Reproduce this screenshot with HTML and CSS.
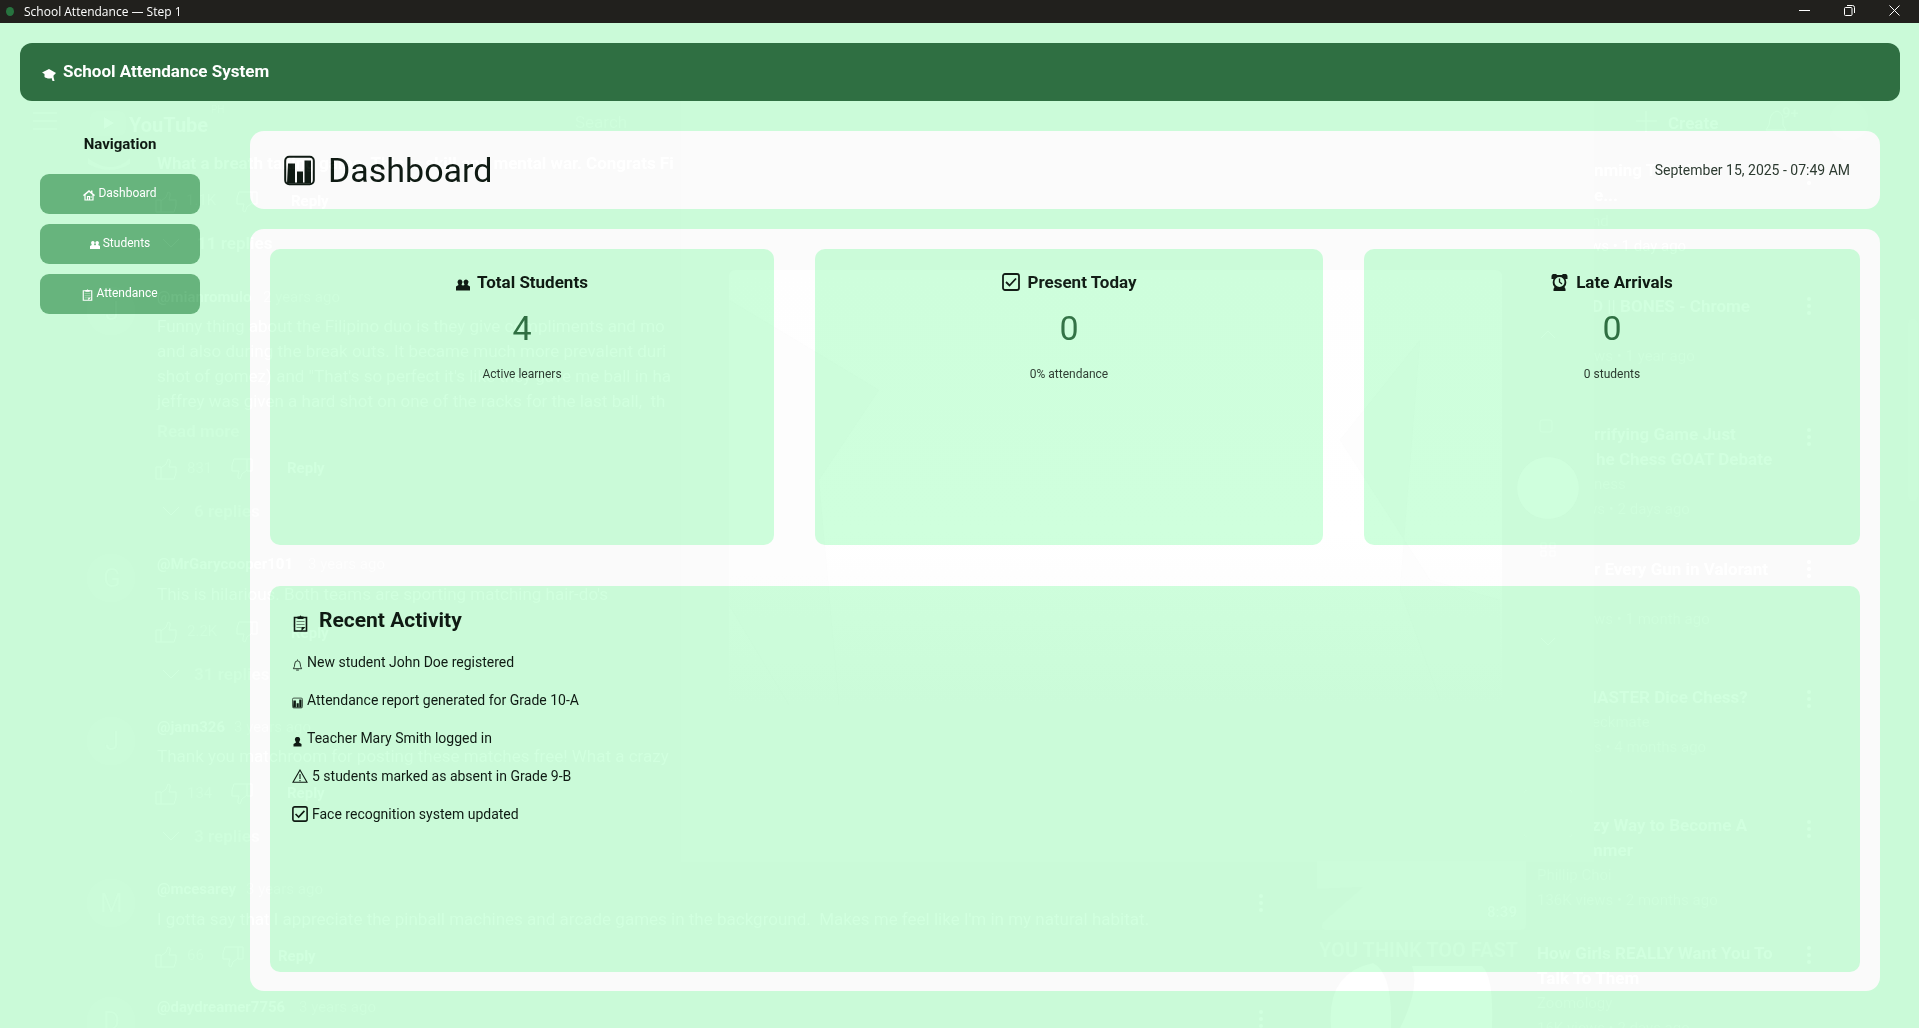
FILE: index.html
```html
<!DOCTYPE html>
<html lang="en">
<head>
<meta charset="utf-8">
<title>School Attendance — Step 1</title>
<link rel="stylesheet" href="styles.css">
</head>
<body>
<svg class="defs" aria-hidden="true">
  <symbol id="i-cap" viewBox="0 0 14 14"><path fill="currentColor" d="M7 2 0 5.500 2.500 7v3c2 1.500 5 2 7 1l1 3h2l-1-4V8.500L14 6z"/></symbol>
  <symbol id="i-home" viewBox="0 0 12 12"><path fill="currentColor" d="M6 1 0 6l1 1.200L6 3l5 4.200L12 6 9.500 4V1.500H8v1.200z"/><path fill="none" stroke="currentColor" stroke-width="1.200" d="M2 6v5h8V6M4.500 11V7.500h2V11M7.500 8h1.500"/></symbol>
  <symbol id="i-users" viewBox="0 0 14 11"><path fill="currentColor" d="M4 0a2.500 2.500 0 0 1 2 4l-.5 1.500L7 6l1.500-.5L8 4a2.500 2.500 0 1 1 4 0l-.5 1.500L14 7v4H0V7l2.500-1.500L2 4a2.500 2.500 0 0 1 2-4z"/></symbol>
  <symbol id="i-clip" viewBox="0 0 14 17"><path fill="none" stroke="currentColor" stroke-width="1.600" d="M1 2.500h12V16H1z"/><path fill="currentColor" d="M4 4V1.500h2Q7-.5 8 1.500h2V4zM8 16v-4h4z"/><path fill="none" stroke="currentColor" opacity=".5" d="M3 6.500h8M3 9.500h8M3 12.500h5"/></symbol>
  <symbol id="i-chart" viewBox="0 0 31 30"><rect x="1.200" y="1.200" width="28.600" height="27.600" rx="4" fill="none" stroke="currentColor" stroke-width="2"/><path fill="currentColor" d="M4 8h7v19h2V16h6v11h1.500V5H27v23H3z"/></symbol>
  <symbol id="i-check" viewBox="0 0 18 18"><rect x="1" y="1" width="16" height="16" rx="2" fill="none" stroke="currentColor" stroke-width="1.800"/><path fill="none" stroke="currentColor" stroke-width="1.800" d="m4 9 3.500 3.500L14 5.500"/></symbol>
  <symbol id="i-clock" viewBox="0 0 16 17"><path fill="currentColor" fill-rule="evenodd" d="M0 3a3 3 0 0 1 5.500-2h5A3 3 0 0 1 16 3v2h-2q2 5-1 8l1 2v2H2v-2l1-2Q0 10 2 5H0zm8 0a5 5 0 1 0 0 10A5 5 0 0 0 8 3z"/><path fill="none" stroke="currentColor" stroke-width="1.300" d="M8 4.500V8l2.500 2"/></symbol>
  <symbol id="i-bell" viewBox="0 0 11 13"><path fill="none" stroke="currentColor" stroke-width=".9" d="M5.500.5v1.200M1 10.500q1.500-2 1.500-5a3 3.500 0 0 1 6 0q0 3 1.500 5zM4 12h3"/></symbol>
  <symbol id="i-user" viewBox="0 0 11 12"><path fill="currentColor" d="M5.500 2a2.200 2.500 0 0 1 2 4.200L7 7.500l2.500 1.500v2.500h-8V9L4 7.500l-.5-1.300A2.200 2.500 0 0 1 5.500 2z"/></symbol>
  <symbol id="i-warn" viewBox="0 0 16 14"><path fill="none" stroke="currentColor" stroke-width="1.100" d="M8 1 1 13.200h14zM8 5v5M8 11v1.200"/></symbol>
  <symbol id="g-up" viewBox="0 0 22 22"><path class="gline" d="M1 9h5v12H1zM6 10l5-4 2-5q3 0 2 4l-1 4h7v6l-2 6H6"/></symbol>
  <symbol id="g-dots" viewBox="0 0 4 18"><circle cx="2" cy="2" r="2"/><circle cx="2" cy="9" r="2"/><circle cx="2" cy="16" r="2"/></symbol>
</svg>

<header class="titlebar">
  <span class="app-dot"></span>
  <span class="window-title">School Attendance — Step 1</span>
  <button class="win-btn" aria-label="Minimize"><svg width="11" height="11"><path d="M0 5.500h11"/></svg></button>
  <button class="win-btn" aria-label="Restore"><svg width="11" height="11"><path d="M.5 3.500a1 1 0 0 1 1-1H7a1 1 0 0 1 1 1v6a1 1 0 0 1-1 1H1.500a1 1 0 0 1-1-1zM3 .5h5.500a2 2 0 0 1 2 2V8"/></svg></button>
  <button class="win-btn" aria-label="Close"><svg width="11" height="11"><path d="m.5.5 10 10m0-10-10 10"/></svg></button>
</header>

<div class="app">
  <div class="appbar">
    <svg class="i14"><use href="#i-cap"/></svg>
    <h1>School Attendance System</h1>
  </div>
  <div class="layout">
    <nav class="sidebar">
      <h2>Navigation</h2>
      <button><svg class="i12"><use href="#i-home"/></svg>Dashboard</button>
      <button><svg class="i10"><use href="#i-users"/></svg>Students</button>
      <button><svg class="i11"><use href="#i-clip"/></svg>Attendance</button>
    </nav>
    <main>
      <section class="panel page-head">
        <svg class="i31"><use href="#i-chart"/></svg>
        <h2>Dashboard</h2>
        <time>September 15, 2025 - 07:49 AM</time>
      </section>
      <section class="panel content">
        <div class="stats">
          <article class="card stat">
            <h3><svg class="i14 low"><use href="#i-users"/></svg>Total Students</h3>
            <strong>4</strong><p>Active learners</p>
          </article>
          <article class="card stat">
            <h3 class="wide"><svg class="i18"><use href="#i-check"/></svg>Present Today</h3>
            <strong>0</strong><p>0% attendance</p>
          </article>
          <article class="card stat">
            <h3 class="wide"><svg class="i17"><use href="#i-clock"/></svg>Late Arrivals</h3>
            <strong>0</strong><p>0 students</p>
          </article>
        </div>
        <article class="card activity">
          <h3><svg class="i17 low"><use href="#i-clip"/></svg>Recent Activity</h3>
          <ul>
            <li><svg class="i11 low"><use href="#i-bell"/></svg>New student John Doe registered</li>
            <li><svg class="i11 low"><use href="#i-chart"/></svg>Attendance report generated for Grade 10-A</li>
            <li><svg class="i11 low"><use href="#i-user"/></svg>Teacher Mary Smith logged in</li>
            <li><svg class="i16"><use href="#i-warn"/></svg>5 students marked as absent in Grade 9-B</li>
            <li><svg class="i16"><use href="#i-check"/></svg>Face recognition system updated</li>
          </ul>
        </article>
      </section>
    </main>
  </div>
</div>

<!-- Window behind the translucent app: adds a little light wherever it is bright -->
<svg class="behind" aria-hidden="true">
  <defs>
    <clipPath id="left"><path d="M0 0h681v862h1238v166H0z"/></clipPath>
    <clipPath id="right"><path d="M1594 0h325v1028h-400V862h75z"/></clipPath>
    <linearGradient id="fade" x1="0" y1="0" x2="0" y2="1"><stop offset="0" stop-color="#040404"/><stop offset=".6" stop-color="#050505"/><stop offset="1" stop-color="#010101"/></linearGradient>
  </defs>
  <path class="g1" d="M681 100h913v762H681z"/>
  <rect x="729" y="270" width="773" height="435" rx="6" fill="url(#fade)"/>
  <path class="g2" d="M729 300l150 90-60 90 20 225h-50l-60-100zM1340 440l80-100-20 250 40 110h60V600l-70-20z" opacity=".5"/>

  <g clip-path="url(#left)">
    <path class="gline" d="M33 113h24M33 121h24M33 129h24"/>
    <rect class="g1" x="90" y="111" width="36" height="25" rx="6"/><path d="m104 117 10 6-10 6z"/>
    <text class="logo" x="129" y="132">YouTube</text><text class="s10 dim" x="211" y="113">PH</text>
    <text class="s16 dim" x="575" y="128">Search</text>
    <path d="M88 158q24 18 42 0v6q-20 12-42 0z" opacity=".4"/>
    <text class="b16" x="157" y="169">What a breath taking game. This is skill and mental war. Congrats Fi</text>
    <use href="#g-up" x="155" y="191" width="22" height="22"/><text class="s14 dim" x="186" y="205">1.1K</text>
    <use href="#g-up" width="22" height="22" transform="rotate(180 129 106.500)"/><text class="b14" x="291" y="206">Reply</text>
    <path class="gline" d="m163 239 8 8 8-8"/><text class="b16 soft" x="197" y="249">11 replies</text>
    <circle class="g1" cx="111" cy="311" r="25"/><text class="avatar" x="105" y="320">J</text>
    <text class="b14" x="157" y="302">@mianromulo</text><text class="s14 dim" x="263" y="302">2 years ago</text>
    <text class="s16" x="157" y="332">Funny thing about the Filipino duo is they give compliments and mo</text>
    <text class="s16" x="157" y="357">and also during the break outs. It became much more prevalent duri</text>
    <text class="s16" x="157" y="382">shot of gomez) and "That's so perfect it's like they gave me ball in ha</text>
    <text class="s16" x="157" y="407">jeffrey was given a hard shot on one of the racks for the last ball,&#160; th</text>
    <text class="b16 dim" x="157" y="437">Read more</text>
    <use href="#g-up" x="155" y="458" width="22" height="22"/><text class="s14 dim" x="187" y="473">831</text><use href="#g-up" width="22" height="22" transform="rotate(180 126.500 240)"/>
    <text class="b14" x="287" y="473">Reply</text>
    <path class="gline" d="m163 507 8 8 8-8"/><text class="b16 dim" x="194" y="517">6 replies</text>
    <circle class="g1" cx="111" cy="578" r="25"/><text class="avatar" x="103" y="587">G</text>
    <text class="b14" x="157" y="569">@MrGarycooper101</text><text class="s14 dim" x="308" y="569">3 years ago</text>
    <text class="s16" x="157" y="600">This is hilarious. Both teams are sporting matching hair-do's</text>
    <use href="#g-up" x="155" y="621" width="22" height="22"/><text class="s14 dim" x="187" y="636">2.2K</text><use href="#g-up" width="22" height="22" transform="rotate(180 129 321.500)"/>
    <text class="b14" x="291" y="638">Reply</text>
    <path class="gline" d="m163 670 8 8 8-8"/><text class="b16 dim" x="194" y="680">31 replies</text>
    <circle class="g1" cx="111" cy="741" r="25"/><text class="avatar" x="105" y="750">J</text>
    <text class="b14" x="157" y="732">@jann326</text><text class="s14 dim" x="234" y="732">3 years ago</text>
    <text class="s16" x="157" y="762">Thank you matchroom for posting these matches free! What a crazy</text>
    <use href="#g-up" x="155" y="783" width="22" height="22"/><text class="s14 dim" x="187" y="798">134</text><use href="#g-up" width="22" height="22" transform="rotate(180 126.500 402.500)"/>
    <text class="b14" x="287" y="798">Reply</text>
    <path class="gline" d="m163 832 8 8 8-8"/><text class="b16 dim" x="194" y="842">3 replies</text>
    <circle class="g1" cx="111" cy="903" r="25"/><text class="avatar" x="100" y="912">M</text>
    <text class="b14" x="157" y="894">@mcesarey</text><text class="s14 dim" x="246" y="894">3 years ago</text>
    <text class="s16" x="157" y="925">I gotta say that I appreciate the pinball machines and arcade games in the background.&#160; Makes me feel like I'm in my natural habitat.</text>
    <use href="#g-up" x="155" y="946" width="22" height="22"/><text class="s14 dim" x="187" y="960">66</text><use href="#g-up" width="22" height="22" transform="rotate(180 122 484)"/>
    <text class="b14" x="278" y="961">Reply</text>
    <circle class="g1" cx="111" cy="1021" r="25"/><text class="avatar" x="103" y="1030">D</text>
    <text class="b14" x="157" y="1012">@daydreamer7756</text><text class="s14 dim" x="299" y="1012">3 years ago</text>
    <use href="#g-dots" x="1259" y="894" width="4" height="18"/><use href="#g-dots" x="1259" y="1010" width="4" height="18"/>
  </g>

  <path class="gline" d="M1636 121h21M1646 111v21M1766 130h20l-3-5v-6q0-6-6-8-6 2-7 8l-1 6z"/>
  <text class="b16" x="1668" y="129">Create</text><text class="b14 dim" x="1782" y="118">9+</text>
  <circle class="g1" cx="1849" cy="121" r="20"/>
  <rect class="g1" x="1908" y="318" width="10" height="184" rx="5"/>
  <circle class="g3" cx="1548" cy="488" r="31"/>
  <path class="gline" d="m1541 338 7-7 7 7M1541 638l7 7 7-7M1540 422q0-2 2-2h8q2 0 2 2v8q0 2-2 2h-8q-2 0-2-2z"/>
  <path class="gline" d="M1541 543h5v5h-5zM1550 543h5v5h-5zM1541 551h5v5h-5zM1550 551h5v5h-5z"/>
  <rect class="gline" x="1524" y="790" width="48" height="47" rx="3" opacity=".5"/>
  <g clip-path="url(#right)">
    <text class="b16" x="1594" y="176">nming Tutorial</text><text class="b16" x="1594" y="201">e...</text>
    <text class="s14 dim" x="1592" y="226">nd</text><text class="s14" x="1590" y="251">ws • 1 day ago</text>
    <text class="b16" x="1592" y="312">D || BONES - Chrome</text><text class="s14 dim" x="1594" y="361">ws • 1 year ago</text>
    <text class="b16" x="1594" y="440">rrifying Game Just</text><text class="b16" x="1596" y="465">he Chess GOAT Debate</text>
    <text class="s14 dim" x="1594" y="489">ness</text><text class="s14 dim" x="1586" y="514">ws • 2 days ago</text>
    <text class="b16" x="1594" y="575">r Every Gun in Valorant</text><text class="s14 dim" x="1594" y="624">ws • 1 month ago</text>
    <text class="b16" x="1592" y="703">IASTER Dice Chess?</text><text class="s14 dim" x="1592" y="727">eckmate</text><text class="s14 dim" x="1594" y="752">s • 4 months ago</text>
    <text class="b16" x="1592" y="831">zy Way to Become A</text><text class="b16" x="1588" y="856">mmer</text>
    <text class="s14 dim" x="1537" y="880">Phillip Choi</text><text class="s14 dim" x="1537" y="905">136K views • 2 months ago</text>
    <text class="b16" x="1537" y="959">How Girls REALLY Want You To</text><text class="b16" x="1537" y="984">Talk To Them</text>
    <text class="s14 dim" x="1537" y="1008">Zoomology</text><text class="s14 dim" x="1537" y="1033">16K views • 2 days ago</text>
  </g>
  <use href="#g-dots" x="1807" y="167" width="4" height="18"/><use href="#g-dots" x="1807" y="297" width="4" height="18"/><use href="#g-dots" x="1807" y="428" width="4" height="18"/><use href="#g-dots" x="1807" y="560" width="4" height="18"/><use href="#g-dots" x="1807" y="690" width="4" height="18"/><use href="#g-dots" x="1807" y="820" width="4" height="18"/><use href="#g-dots" x="1807" y="946" width="4" height="18"/>
  <path class="g2" d="M1317 861h209v64q0 5-5 5h-194q-8 0-4-8l40-35-46 2z"/>
  <text class="b14" x="1487" y="917">8:39</text>
  <text class="b20 dim" x="1319" y="957">YOU THINK TOO FAST</text>
  <path class="g3" d="M1331 1028q-5-55 42-65 20 10 18 65zM1400 1028q20-40 12-62h70q12 10 10 62z"/>
</svg>
</body>
</html>
```
FILE: styles.css
```css
* { box-sizing: border-box; }
body {
  margin: 0;
  min-height: 100vh;
  display: flex;
  flex-direction: column;
  background: #cafad8;
  color: #0f1a13;
  font-family: Roboto, "Liberation Sans", sans-serif;
  font-size: 14px;
  line-height: 20px;
}
h1, h2, h3, p, ul { margin: 0; padding: 0; }
h1, h2, h3 { font-weight: 700; }
button { font: inherit; border: 0; }
.defs { position: absolute; width: 0; height: 0; }

/* Title bar */
.titlebar {
  height: 23px;
  display: flex;
  align-items: center;
  padding: 0 2px 0 6px;
  background: #21201d;
  color: #fff;
  font-family: "Open Sans", "Noto Sans", sans-serif;
  font-size: 12px;
}
.app-dot { width: 8px; height: 9px; border-radius: 50%; background: #27733f; margin-right: 10px; }
.window-title { flex: 1; }
.win-btn { align-self: flex-start; width: 45px; height: 20px; padding: 0; background: none; color: #fff; display: grid; place-items: center; }
.win-btn svg { fill: none; stroke: currentColor; }

/* App frame */
.app { flex: 1; display: flex; flex-direction: column; padding: 20px 19px 37px 20px; gap: 30px; }
.appbar {
  display: flex;
  align-items: center;
  gap: 7px;
  height: 58px;
  padding: 0 22px 2px;
  border-radius: 12px;
  background: #2f6f42;
  color: #fff;
}
.appbar svg { margin-top: 5px; }
.appbar h1 { font-size: 17px; }
.layout { flex: 1; display: flex; gap: 50px; padding: 0 20px; }

.sidebar { width: 160px; display: flex; flex-direction: column; gap: 10px; }
.sidebar h2 { font-size: 15px; line-height: 26px; text-align: center; margin-bottom: 7px; }
.sidebar button {
  height: 40px;
  display: flex;
  align-items: center;
  justify-content: center;
  gap: 3px;
  padding: 0 0 2px;
  border-radius: 9px;
  background: #67b47d;
  color: #fff;
  font-size: 12px;
}
.sidebar button svg { margin-top: 3px; }

main { flex: 1; display: flex; flex-direction: column; gap: 20px; }
.panel { background: #fafafa; border-radius: 14px; }
.page-head { display: flex; align-items: center; gap: 13px; height: 78px; padding: 0 30px 0 34px; }
.page-head h2 { flex: 1; font-size: 34px; line-height: 40px; font-weight: 400; }
.page-head time { color: #2c3a30; }

.content { flex: 1; display: flex; flex-direction: column; gap: 41px; padding: 20px 20px 19px; }
.stats { flex: 1 1 296px; display: grid; grid-template-columns: 504fr 508fr 496fr; gap: 41px; }
.card { background: #cafad8; border-radius: 10px; }
.stat { display: flex; flex-direction: column; align-items: center; padding: 20px; }
.stat h3 { display: flex; align-items: center; gap: 7px; font-size: 17px; line-height: 26px; }
.stat h3.wide { gap: 8px; }
.stat strong { font-size: 34px; line-height: 40px; font-weight: 400; color: #2f6f42; margin-top: 13px; }
.stat p { font-size: 12px; color: #2c3a30; margin-top: 16px; }

.activity { flex: 1 1 386px; padding: 20px 22px; }
.activity h3 { display: flex; align-items: center; gap: 10px; font-size: 21px; line-height: 28px; margin-bottom: 18px; }
.activity ul { list-style: none; display: flex; flex-direction: column; gap: 18px; }
.activity li { display: flex; align-items: center; gap: 4px; }

.i10 { width: 10px; height: 10px; }
.i11 { width: 11px; height: 12px; }
.i12 { width: 12px; height: 12px; }
.i14 { width: 14px; height: 14px; }
.i16 { width: 16px; height: 16px; }
.i17 { width: 17px; height: 17px; }
.i18 { width: 18px; height: 18px; }
.i31 { width: 31px; height: 31px; }
.low { margin-top: 6px; }

/* Faint desktop showing through the window */
.behind {
  position: absolute;
  inset: 0;
  width: 100%;
  height: 100%;
  pointer-events: none;
  mix-blend-mode: plus-lighter;
  fill: #070707;
  font-family: Roboto, sans-serif;
}
.gline { fill: none; stroke: #060606; stroke-width: 1; }
.g1 { fill: #010101; }
.g2 { fill: #020202; }
.g3 { fill: #050505; }
.dim { fill: #040404; }
.soft { fill: #060606; }
.s10 { font-size: 10px; }
.s14 { font-size: 15px; }
.s16 { font-size: 17px; }
.b14 { font-size: 15px; font-weight: 700; }
.b16 { font-size: 17px; font-weight: 700; }
.b20 { font-size: 20px; font-weight: 700; }
.logo { font-size: 20px; font-weight: 700; }
.avatar { font-size: 26px; fill: #040404; }
```
